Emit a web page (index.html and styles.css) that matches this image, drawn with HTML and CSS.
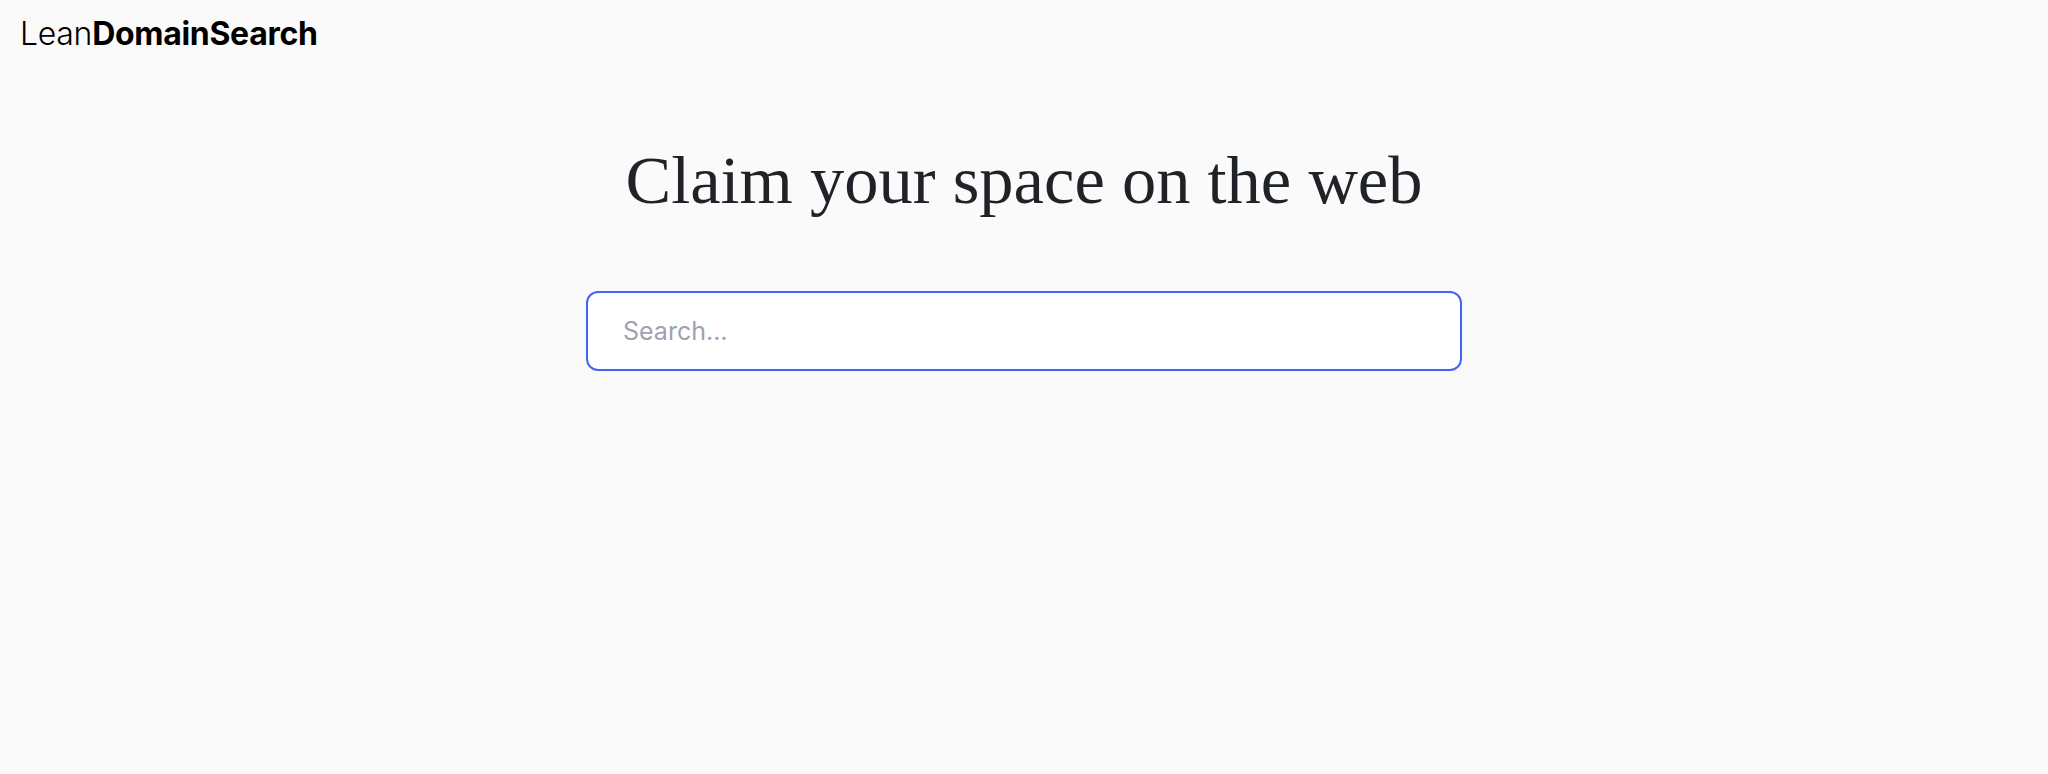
FILE: index.html
```html
<!DOCTYPE html>
<html lang="en">
<head>
<meta charset="utf-8">
<title>LeanDomainSearch</title>
<link rel="stylesheet" href="styles.css">
</head>
<body>
<header class="header">
  <a class="logo" href="#"><span class="logo-light">Lean</span><span class="logo-bold">DomainSearch</span></a>
</header>
<main class="main">
  <h1 class="title">Claim your space on the web</h1>
  <div class="search">
    <input class="search-input" type="text" placeholder="Search...">
  </div>
</main>
</body>
</html>
```

FILE: styles.css
```css
html, body {
  margin: 0;
  padding: 0;
  background: #fafafa;
}
body {
  font-family: Inter, "Liberation Sans", sans-serif;
  color: #1f2328;
  min-height: 774px;
}
.header {
  padding: 18px 20px 0;
  height: 32px;
}
.logo {
  display: inline-block;
  font-family: Inter, "Liberation Sans", sans-serif;
  font-size: 32px;
  line-height: 32px;
  color: #000;
  text-decoration: none;
  letter-spacing: -0.3px;
}
.logo-light {
  font-weight: 300;
}
.logo-bold {
  font-weight: 700;
}
.main {
  display: flex;
  flex-direction: column;
  align-items: center;
}
.title {
  margin: 96px 0 0;
  font-family: "Liberation Serif", "DejaVu Serif", serif;
  font-weight: 400;
  font-size: 68.5px;
  line-height: 68px;
  color: #1f2328;
}
.search {
  margin-top: 77px;
  width: 876px;
}
.search-input {
  box-sizing: border-box;
  width: 100%;
  height: 80px;
  border: 2px solid #4466f2;
  border-radius: 12px;
  background: #fff;
  padding: 0 35px;
  font-family: Inter, "Liberation Sans", sans-serif;
  font-size: 25px;
  color: #1f2328;
  outline: none;
}
.search-input::placeholder {
  color: #9ca3af;
}
```
